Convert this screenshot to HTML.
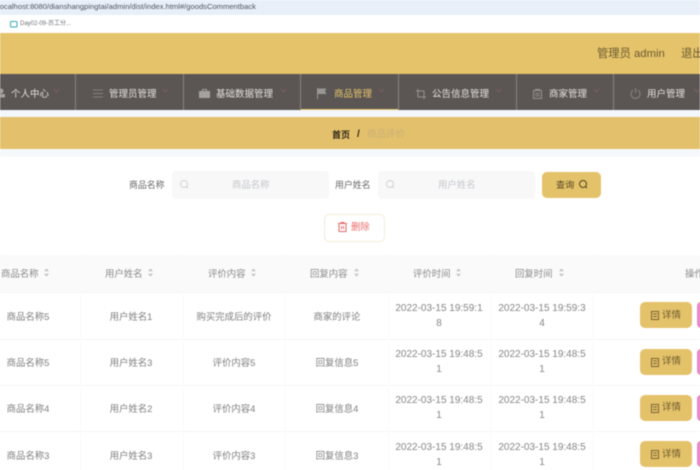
<!DOCTYPE html>
<html lang="zh">
<head>
<meta charset="utf-8">
<style>
html,body{margin:0;padding:0;width:700px;height:470px;overflow:hidden;background:#fff}
body{position:relative;font-family:"Liberation Sans","Noto Sans CJK SC",sans-serif;font-size:9.4px;color:#7d7d7d}
.a{position:absolute}
.t{position:absolute;white-space:nowrap;line-height:14px}
.c{position:absolute;text-align:center;white-space:nowrap;line-height:15px;transform:translateX(-50%)}
.d{font-size:10px;color:#858585}
#root{position:absolute;inset:0;filter:blur(.5px)}
.nv{color:#e4e0dc;font-size:9.5px;top:88px}
.dv{position:absolute;top:74px;width:1px;height:36px;background:#87827f}
.ch{position:absolute;top:88px;width:5px;height:5px}
.vl{position:absolute;top:255px;width:1px;height:215px;background:#fbfbfb}
.hl{position:absolute;left:0;width:700px;height:1px;background:#f6f6f6}
.btn{position:absolute;left:640px;width:52px;height:26px;background:#e4c26a;border-radius:5px}
.pink{position:absolute;left:697px;width:6px;height:26px;background:#e78ac6;border-radius:4px 0 0 4px}
.bt{position:absolute;left:662px;color:#6c5a2c;font-size:9.5px;line-height:14px}
svg{position:absolute;overflow:visible}
</style>
</head>
<body>
<div id="root">
<div class="a" style="left:0;top:0;width:700px;height:15px;background:#e9eff8"></div>
<div class="t" style="left:-2px;top:0;font-size:7.6px;color:#4d5560">localhost:8080/dianshangpingtai/admin/dist/index.html#/goodsCommentback</div>
<div class="a" style="left:0;top:15px;width:700px;height:18px;background:#fff"></div>
<svg style="left:10px;top:20px" width="8" height="8" viewBox="0 0 8 8"><rect x=".5" y="1.5" width="6.5" height="5.5" rx="1" fill="none" stroke="#35a7b8"/></svg>
<div class="t" style="left:20px;top:17px;font-size:6px;color:#6b7078">Day02-09-员工分...</div>

<div class="a" style="left:0;top:33px;width:700px;height:41px;background:#e5c36b"></div>
<div class="t" style="left:597px;top:47px;font-size:11.3px;color:#6b5a30">管理员 admin</div>
<div class="t" style="left:681px;top:47px;font-size:11.3px;color:#6b5a30">退出</div>

<div class="a" style="left:0;top:74px;width:700px;height:36px;background:#5b5654"></div>
<div class="a" style="left:0;top:110px;width:700px;height:7px;background:#f3f6fb"></div>
<div class="a" style="left:300px;top:109px;width:98px;height:1px;background:#e5c36b"></div>
<div class="dv" style="left:75px"></div><div class="dv" style="left:183px"></div><div class="dv" style="left:300px"></div><div class="dv" style="left:398px"></div><div class="dv" style="left:516px"></div><div class="dv" style="left:613px"></div>

<svg style="left:-2px;top:88px" width="9" height="10" viewBox="0 0 9 10" fill="#a5a19d"><circle cx="3" cy="3" r="2.5"/><rect x="0" y="6" width="7" height="3.5"/></svg>
<div class="t nv" style="left:11px">个人中心</div>
<svg style="left:92px;top:89px" width="12" height="10" viewBox="0 0 12 10" stroke="#85807c" fill="none"><path d="M1 1H11M1 4.500H11M1 8H11"/></svg>
<div class="t nv" style="left:109px">管理员管理</div>
<svg style="left:199px;top:89px" width="11" height="10" viewBox="0 0 11 10"><rect x="0" y="2" width="11" height="7" fill="#a5a19d"/><path d="M3.500 2V.5H7.500V2" fill="none" stroke="#a5a19d"/></svg>
<div class="t nv" style="left:216px">基础数据管理</div>
<svg style="left:317px;top:88px" width="10" height="11" viewBox="0 0 10 11"><path d="M.5 0V11" stroke="#9a9693"/><path d="M1 .5H9.500L8 3L9.500 6H1Z" fill="#9a9693"/></svg>
<div class="t nv" style="left:334px;color:#e5c36b">商品管理</div>
<svg style="left:416px;top:89px" width="10" height="10" viewBox="0 0 10 10" fill="none" stroke="#95918e"><path d="M2 0V8H10M0 2H8V10"/></svg>
<div class="t nv" style="left:432px">公告信息管理</div>
<svg style="left:533px;top:89px" width="9" height="10" viewBox="0 0 9 10"><rect x=".5" y="1.500" width="8" height="8" fill="none" stroke="#95918e"/><path d="M2 0.500H7M2 4.500H7M2 6.800H7" stroke="#95918e"/></svg>
<div class="t nv" style="left:549px">商家管理</div>
<svg style="left:630px;top:88px" width="11" height="11" viewBox="0 0 11 11" fill="none" stroke="#8a8581"><path d="M3.300 2A4.500 4.500 0 1 0 7.700 2M5.500 0V5"/></svg>
<div class="t nv" style="left:647px">用户管理</div>

<svg class="ch" style="left:54px" viewBox="0 0 5 5" fill="none" stroke="#7b5f5f"><path d="M0 1L2.500 4L5 1"/></svg>
<svg class="ch" style="left:163px" viewBox="0 0 5 5" fill="none" stroke="#7b5f5f"><path d="M0 1L2.500 4L5 1"/></svg>
<svg class="ch" style="left:281px" viewBox="0 0 5 5" fill="none" stroke="#7b5f5f"><path d="M0 1L2.500 4L5 1"/></svg>
<svg class="ch" style="left:379px" viewBox="0 0 5 5" fill="none" stroke="#7b5f5f"><path d="M0 1L2.500 4L5 1"/></svg>
<svg class="ch" style="left:496px" viewBox="0 0 5 5" fill="none" stroke="#7b5f5f"><path d="M0 1L2.500 4L5 1"/></svg>
<svg class="ch" style="left:594px" viewBox="0 0 5 5" fill="none" stroke="#7b5f5f"><path d="M0 1L2.500 4L5 1"/></svg>
<svg class="ch" style="left:694px" viewBox="0 0 5 5" fill="none" stroke="#7b5f5f"><path d="M0 1L2.500 4L5 1"/></svg>

<div class="a" style="left:0;top:117px;width:700px;height:32px;background:#e3c06b"></div>
<div class="a" style="left:0;top:149px;width:700px;height:8px;background:#f6f9fb"></div>
<div class="t" style="left:332px;top:128px;font-size:9px;font-weight:bold;color:#33291a">首页</div>
<div class="t" style="left:357px;top:128px;font-size:10px;font-weight:bold;color:#33291a">/</div>
<div class="t" style="left:367px;top:128px;font-size:9.5px;color:#c9b07a">商品评价</div>

<div class="t" style="left:129px;top:178px;font-size:8.9px;color:#666">商品名称</div>
<div class="a" style="left:172px;top:171px;width:157px;height:28px;background:#f8f8f9;border-radius:4px"></div>
<svg style="left:180px;top:180px" width="9" height="9" viewBox="0 0 9 9" fill="none" stroke="#d0d2d6"><circle cx="4" cy="4" r="3.500"/><path d="M6.500 6.500L8 8"/></svg>
<div class="t" style="left:232px;top:178px;color:#c4c6ca">商品名称</div>
<div class="t" style="left:335px;top:178px;font-size:8.9px;color:#666">用户姓名</div>
<div class="a" style="left:378px;top:171px;width:157px;height:28px;background:#f8f8f9;border-radius:4px"></div>
<svg style="left:386px;top:180px" width="9" height="9" viewBox="0 0 9 9" fill="none" stroke="#d0d2d6"><circle cx="4" cy="4" r="3.500"/><path d="M6.500 6.500L8 8"/></svg>
<div class="t" style="left:438px;top:178px;color:#c4c6ca">用户姓名</div>
<div class="a" style="left:542px;top:172px;width:59px;height:26px;background:#e4c26a;border-radius:5px"></div>
<div class="t" style="left:556px;top:178px;font-size:9.2px;color:#54461f">查询</div>
<svg style="left:579px;top:180px" width="9" height="9" viewBox="0 0 9 9" fill="none" stroke="#54461f"><circle cx="4" cy="4" r="3.500"/><path d="M6.500 6.500L8 8"/></svg>

<div class="a" style="left:324px;top:214px;width:59px;height:26px;background:#fff;border:1px solid #f4ecd6;border-radius:5px"></div>
<svg style="left:338px;top:222px" width="9" height="10" viewBox="0 0 9 10" fill="none" stroke="#e86a6a"><path d="M0 1.500H9M3 1.500V.5H6V1.500M1 1.500V9.500H8V1.500M3.500 4V7M5.500 4V7"/></svg>
<div class="t" style="left:351px;top:220px;color:#e86a6a">删除</div>

<div class="a" style="left:0;top:255px;width:700px;height:37px;background:#fafafa"></div>
<div class="hl" style="top:292px"></div><div class="hl" style="top:339px"></div><div class="hl" style="top:385px"></div><div class="hl" style="top:431px"></div>
<div class="vl" style="left:80px"></div><div class="vl" style="left:183px"></div><div class="vl" style="left:285px"></div><div class="vl" style="left:388px"></div><div class="vl" style="left:490px"></div><div class="vl" style="left:593px"></div>

<div class="t" style="left:1px;top:267px;color:#8a8a8a">商品名称</div>
<div class="t" style="left:105px;top:267px;color:#8a8a8a">用户姓名</div>
<div class="t" style="left:208px;top:267px;color:#8a8a8a">评价内容</div>
<div class="t" style="left:310px;top:267px;color:#8a8a8a">回复内容</div>
<div class="t" style="left:413px;top:267px;color:#8a8a8a">评价时间</div>
<div class="t" style="left:515px;top:267px;color:#8a8a8a">回复时间</div>
<div class="t" style="left:685px;top:267px;color:#8a8a8a">操作</div>
<svg style="left:44px;top:268px" width="5" height="9" viewBox="0 0 6 10" fill="#c4c4c4"><path d="M3 0L6 3.500H0ZM3 10L6 6.500H0Z"/></svg>
<svg style="left:148px;top:268px" width="5" height="9" viewBox="0 0 6 10" fill="#c4c4c4"><path d="M3 0L6 3.500H0ZM3 10L6 6.500H0Z"/></svg>
<svg style="left:251px;top:268px" width="5" height="9" viewBox="0 0 6 10" fill="#c4c4c4"><path d="M3 0L6 3.500H0ZM3 10L6 6.500H0Z"/></svg>
<svg style="left:354px;top:268px" width="5" height="9" viewBox="0 0 6 10" fill="#c4c4c4"><path d="M3 0L6 3.500H0ZM3 10L6 6.500H0Z"/></svg>
<svg style="left:456px;top:268px" width="5" height="9" viewBox="0 0 6 10" fill="#c4c4c4"><path d="M3 0L6 3.500H0ZM3 10L6 6.500H0Z"/></svg>
<svg style="left:559px;top:268px" width="5" height="9" viewBox="0 0 6 10" fill="#c4c4c4"><path d="M3 0L6 3.500H0ZM3 10L6 6.500H0Z"/></svg>

<div class="c" style="left:28px;top:309px">商品名称5</div><div class="c" style="left:131px;top:309px">用户姓名1</div><div class="c" style="left:234px;top:309px">购买完成后的评价</div><div class="c" style="left:337px;top:309px">商家的评论</div>
<div class="c d" style="left:439px;top:301px">2022-03-15 19:59:1<br>8</div><div class="c d" style="left:542px;top:301px">2022-03-15 19:59:3<br>4</div>
<div class="btn" style="top:302px"></div><div class="pink" style="top:302px"></div>
<svg style="left:651px;top:311px" width="8" height="9" viewBox="0 0 8 9" fill="none" stroke="#7b6631"><rect x=".5" y=".5" width="7" height="8"/><path d="M2 3H6M2 5.500H6"/></svg><div class="bt" style="top:309px">详情</div>

<div class="c" style="left:28px;top:355px">商品名称5</div><div class="c" style="left:131px;top:355px">用户姓名3</div><div class="c" style="left:234px;top:355px">评价内容5</div><div class="c" style="left:337px;top:355px">回复信息5</div>
<div class="c d" style="left:439px;top:347px">2022-03-15 19:48:5<br>1</div><div class="c d" style="left:542px;top:347px">2022-03-15 19:48:5<br>1</div>
<div class="btn" style="top:349px"></div><div class="pink" style="top:349px"></div>
<svg style="left:651px;top:358px" width="8" height="9" viewBox="0 0 8 9" fill="none" stroke="#7b6631"><rect x=".5" y=".5" width="7" height="8"/><path d="M2 3H6M2 5.500H6"/></svg><div class="bt" style="top:355px">详情</div>

<div class="c" style="left:28px;top:401px">商品名称4</div><div class="c" style="left:131px;top:401px">用户姓名2</div><div class="c" style="left:234px;top:401px">评价内容4</div><div class="c" style="left:337px;top:401px">回复信息4</div>
<div class="c d" style="left:439px;top:393px">2022-03-15 19:48:5<br>1</div><div class="c d" style="left:542px;top:393px">2022-03-15 19:48:5<br>1</div>
<div class="btn" style="top:395px"></div><div class="pink" style="top:395px"></div>
<svg style="left:651px;top:404px" width="8" height="9" viewBox="0 0 8 9" fill="none" stroke="#7b6631"><rect x=".5" y=".5" width="7" height="8"/><path d="M2 3H6M2 5.500H6"/></svg><div class="bt" style="top:401px">详情</div>

<div class="c" style="left:28px;top:448px">商品名称3</div><div class="c" style="left:131px;top:448px">用户姓名3</div><div class="c" style="left:234px;top:448px">评价内容3</div><div class="c" style="left:337px;top:448px">回复信息3</div>
<div class="c d" style="left:439px;top:440px">2022-03-15 19:48:5<br>1</div><div class="c d" style="left:542px;top:440px">2022-03-15 19:48:5<br>1</div>
<div class="btn" style="top:441px"></div><div class="pink" style="top:441px"></div>
<svg style="left:651px;top:450px" width="8" height="9" viewBox="0 0 8 9" fill="none" stroke="#7b6631"><rect x=".5" y=".5" width="7" height="8"/><path d="M2 3H6M2 5.500H6"/></svg><div class="bt" style="top:448px">详情</div>
</div>
</body>
</html>
